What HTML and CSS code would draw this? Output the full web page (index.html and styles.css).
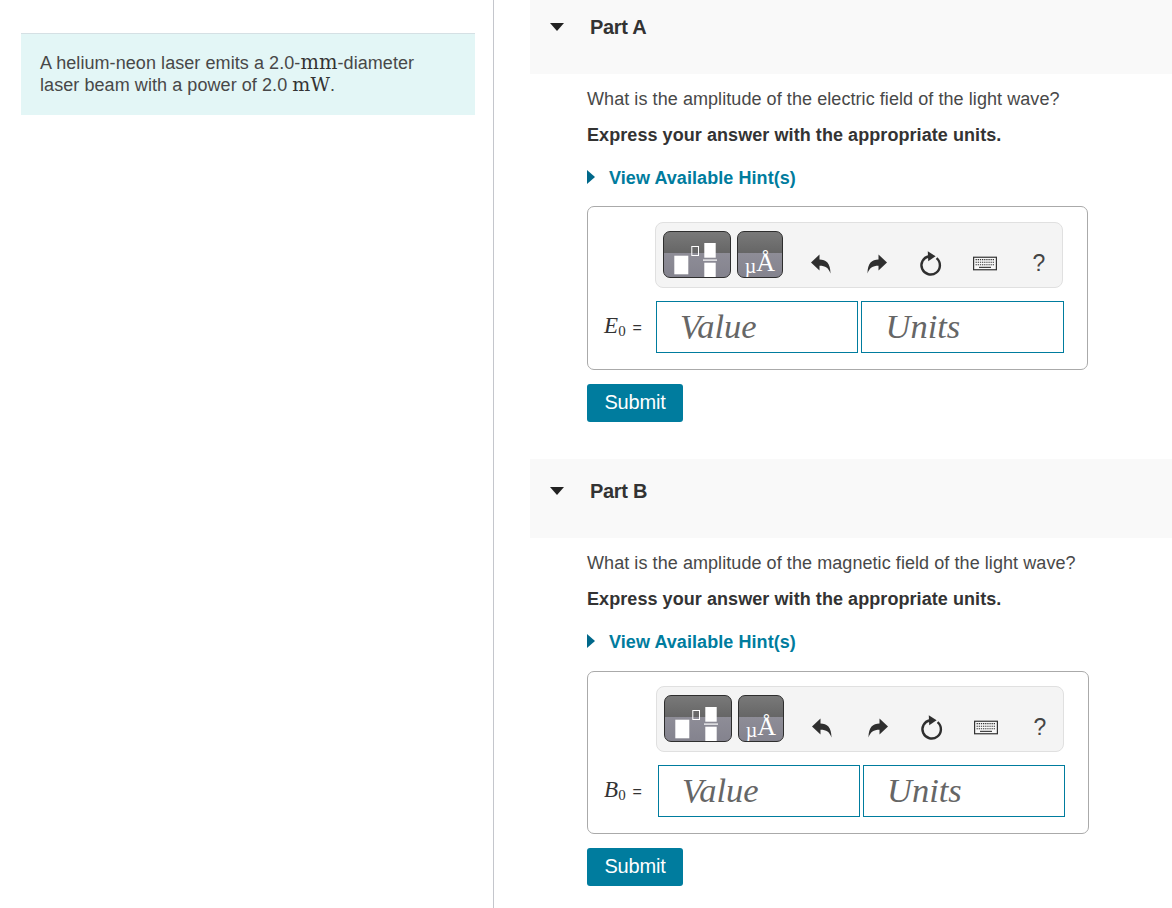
FILE: index.html
```html
<!DOCTYPE html>
<html lang="en">
<head>
    <meta charset="UTF-8">
    <meta name="viewport" content="width=device-width, initial-scale=1.0">
    <title>Helium-neon laser</title>
    <link rel="stylesheet" href="styles.css">
</head>
<body>
    <svg class="icon-defs" aria-hidden="true">
        <symbol id="icon-undo" viewBox="0 0 24 24">
            <path d="M2 11.5 10.500 3.500V8.500C17 8.500 21.500 12 21.500 22.500C19.500 17 16.500 14.800 10.500 14.800V19.500Z"/>
        </symbol>
        <symbol id="icon-reset" viewBox="0 0 26 28">
            <path d="M10.800 6.100A10 10 0 1 0 19 8.200" fill="none" stroke="currentColor" stroke-width="2.600"/>
            <path d="M9.500 .8 18 6.200 10 11.500Z"/>
        </symbol>
        <symbol id="icon-keyboard" viewBox="0 0 28 16">
            <rect x=".7" y=".7" width="26.600" height="14.600" fill="#f8f8f8" stroke="currentColor" stroke-width="1.400"/>
            <path d="M3 3.500h22M3 6.500h22M3 9.500h22" stroke="currentColor" stroke-width="1.300" stroke-dasharray="1.500 1" fill="none"/>
            <path d="M7 12.500h14" stroke="currentColor" stroke-width="1.300" fill="none"/>
        </symbol>
        <symbol id="icon-template" viewBox="0 0 68 47">
            <rect x="11.300" y="24.700" width="14" height="18.600" fill="#fff"/>
            <rect x="28.800" y="15.500" width="6.700" height="9" fill="none" stroke="#fff" stroke-width="1"/>
            <rect x="41.300" y="12" width="11.400" height="14.700" fill="#fff"/>
            <rect x="40" y="28.500" width="14" height="1.200" fill="#fff"/>
            <rect x="41.300" y="31.700" width="11.400" height="15.300" fill="#fff"/>
        </symbol>
    </svg>

    <div class="page">
        <aside class="left">
            <div class="intro">
                A helium-neon laser emits a 2.0-<span class="unit unit-mm">mm</span>-diameter
                laser beam with a power of 2.0 <span class="unit">mW</span>.
            </div>
        </aside>

        <main class="right">
            <section class="part">
                <div class="part-head"><span class="caret"></span><h2>Part A</h2></div>
                <div class="part-body">
                    <p class="question">What is the amplitude of the electric field of the light wave?</p>
                    <p class="express">Express your answer with the appropriate units.</p>
                    <a class="hint" href="#"><span class="hint-arrow"></span>View Available Hint(s)</a>
                    <div class="answer-box">
                        <div class="toolbar">
                            <div class="tpl-btn"><svg class="tpl-icon"><use href="#icon-template"/></svg></div>
                            <div class="tpl-btn tpl-btn-units"><span class="mu">µ</span><span class="angstrom">Å</span></div>
                            <div class="tool tool-undo"><svg class="ico-arrow"><use href="#icon-undo"/></svg></div>
                            <div class="tool"><svg class="ico-arrow flip"><use href="#icon-undo"/></svg></div>
                            <div class="tool"><svg class="ico-reset"><use href="#icon-reset"/></svg></div>
                            <div class="tool"><svg class="ico-keyboard"><use href="#icon-keyboard"/></svg></div>
                            <div class="tool tool-help">?</div>
                        </div>
                        <div class="answer-row">
                            <label class="var"><i>E</i><sub>0</sub> <span class="eq">=</span></label>
                            <input class="field" placeholder="Value">
                            <input class="field" placeholder="Units">
                        </div>
                    </div>
                    <button class="submit" type="button">Submit</button>
                </div>
            </section>

            <section class="part">
                <div class="part-head"><span class="caret"></span><h2>Part B</h2></div>
                <div class="part-body">
                    <p class="question">What is the amplitude of the magnetic field of the light wave?</p>
                    <p class="express">Express your answer with the appropriate units.</p>
                    <a class="hint" href="#"><span class="hint-arrow"></span>View Available Hint(s)</a>
                    <div class="answer-box answer-box-wide">
                        <div class="toolbar">
                            <div class="tpl-btn"><svg class="tpl-icon"><use href="#icon-template"/></svg></div>
                            <div class="tpl-btn tpl-btn-units"><span class="mu">µ</span><span class="angstrom">Å</span></div>
                            <div class="tool tool-undo"><svg class="ico-arrow"><use href="#icon-undo"/></svg></div>
                            <div class="tool"><svg class="ico-arrow flip"><use href="#icon-undo"/></svg></div>
                            <div class="tool"><svg class="ico-reset"><use href="#icon-reset"/></svg></div>
                            <div class="tool"><svg class="ico-keyboard"><use href="#icon-keyboard"/></svg></div>
                            <div class="tool tool-help">?</div>
                        </div>
                        <div class="answer-row">
                            <label class="var var-b"><i>B</i><sub>0</sub> <span class="eq">=</span></label>
                            <input class="field" placeholder="Value">
                            <input class="field" placeholder="Units">
                        </div>
                    </div>
                    <button class="submit" type="button">Submit</button>
                </div>
            </section>
        </main>
    </div>
</body>
</html>
```

FILE: styles.css
```css
html, body {
    margin: 0;
    height: 100%;
    overflow: hidden;
}
body {
    background: #fff;
    font-family: "Liberation Sans", Arial, sans-serif;
    font-size: 18px;
    line-height: 22px;
    letter-spacing: 0.07px;
    color: #484848;
}
.icon-defs {
    display: none;
}
.page {
    display: flex;
    height: 908px;
}
.left {
    width: 493px;
    border-right: 1px solid #c4c6cc;
    padding-top: 33px;
}
.intro {
    width: 396px;
    margin-left: 21px;
    padding: 18px 39px 19px 19px;
    background: #e3f6f6;
    border-top: 1px solid #d5e0e4;
}
.unit {
    font-family: "DejaVu Serif", serif;
    font-size: 19px;
    line-height: 20px;
    color: #333;
}
.unit-mm {
    font-size: 19.500px;
}
.right {
    flex: 1;
    padding-left: 36px;
    margin-top: -5px;
}
.part-head {
    display: flex;
    height: 79px;
    background: #f9f9f9;
    padding: 21px 0 0 20px;
    box-sizing: border-box;
}
.part-head h2 {
    margin: 0;
    font-size: 20px;
    line-height: 22px;
    color: #333;
    font-weight: bold;
    letter-spacing: -0.3px;
}
.caret {
    width: 0;
    height: 0;
    margin: 7px 26px 0 0;
    border-left: 7px solid transparent;
    border-right: 7px solid transparent;
    border-top: 8px solid #222;
}
.part-body {
    padding: 14px 0 37px 57px;
}
.question {
    margin: 0 0 14px 0;
}
.express {
    margin: 0 0 20px 0;
    font-weight: bold;
    color: #333;
}
.hint {
    display: flex;
    align-items: center;
    padding-top: 1px;
    color: #007c9e;
    font-weight: bold;
    text-decoration: none;
}
.hint-arrow {
    width: 0;
    height: 0;
    margin-right: 14px;
    margin-top: -3px;
    border-top: 7px solid transparent;
    border-bottom: 7px solid transparent;
    border-left: 8px solid #00688a;
}
.answer-box {
    width: 501px;
    box-sizing: border-box;
    margin-top: 17px;
    padding: 15px 24px 16px 16px;
    border: 1px solid #aaa;
    border-radius: 7px;
}
.answer-box-wide {
    width: 502px;
    margin-top: 18px;
    padding-top: 14px;
}
.toolbar {
    display: flex;
    justify-content: flex-end;
    align-items: flex-end;
    width: 408px;
    height: 66px;
    margin-left: auto;
    box-sizing: border-box;
    padding: 0 11px 9px 0;
    background: #f4f4f4;
    border: 1px solid #e0e0e0;
    border-radius: 8px;
}
.tpl-btn {
    box-sizing: border-box;
    width: 68px;
    height: 47px;
    margin-right: 6px;
    border: 1px solid #2e2e2e;
    border-radius: 7px;
    background: linear-gradient(#797979 0, #666 46%, #8e8d97 46%, #84838e 100%);
    overflow: hidden;
}
.tpl-btn-units {
    display: flex;
    justify-content: center;
    align-items: flex-end;
    width: 46px;
    margin-right: 26px;
    padding-bottom: 1px;
    color: #fff;
    font-family: "Liberation Serif", serif;
    line-height: 1;
}
.mu {
    font-size: 20px;
}
.angstrom {
    font-size: 26px;
}
.tpl-icon {
    display: block;
    width: 68px;
    height: 47px;
    margin: -1px;
}
.tool {
    display: flex;
    justify-content: center;
    align-items: center;
    width: 24px;
    height: 30px;
    margin-left: 30px;
    color: #333;
}
.tool-undo {
    margin-left: 0;
    margin-right: 2px;
}
.tool-help {
    font-size: 23px;
    color: #444;
}
.ico-arrow {
    width: 24px;
    height: 24px;
    fill: #2f2f2f;
}
.flip {
    transform: scaleX(-1);
}
.ico-reset {
    width: 25px;
    height: 27px;
    fill: #2f2f2f;
    color: #2f2f2f;
}
.ico-keyboard {
    width: 28px;
    height: 17px;
    color: #333;
}
.answer-row {
    display: flex;
    align-items: center;
    gap: 3px;
    margin-top: 13px;
    margin-right: -1px;
}
.var {
    margin-right: 11px;
    white-space: nowrap;
    color: #333;
    font-family: "Liberation Serif", serif;
    font-size: 23px;
}
.var-b {
    margin-right: 13px;
}
.var sub {
    font-size: 15px;
    line-height: 0;
    vertical-align: -3px;
}
.eq {
    margin-left: 1px;
    font-family: "Liberation Sans", Arial, sans-serif;
    font-size: 16px;
}
.field {
    flex: 1;
    min-width: 0;
    box-sizing: border-box;
    height: 52px;
    padding: 0 0 2px 23px;
    border: 1px solid #007c9e;
    background: #fff;
    font-family: "Liberation Serif", serif;
    font-style: italic;
    font-size: 34.500px;
    color: #666;
    outline: none;
}
.field::placeholder {
    color: #666;
    opacity: 1;
}
.submit {
    display: block;
    width: 96px;
    height: 38px;
    margin-top: 14px;
    padding: 0 0 2px 0;
    border: none;
    border-radius: 3px;
    background: #007c9e;
    color: #fff;
    font-family: "Liberation Sans", Arial, sans-serif;
    font-size: 20px;
    letter-spacing: -0.2px;
}
```
